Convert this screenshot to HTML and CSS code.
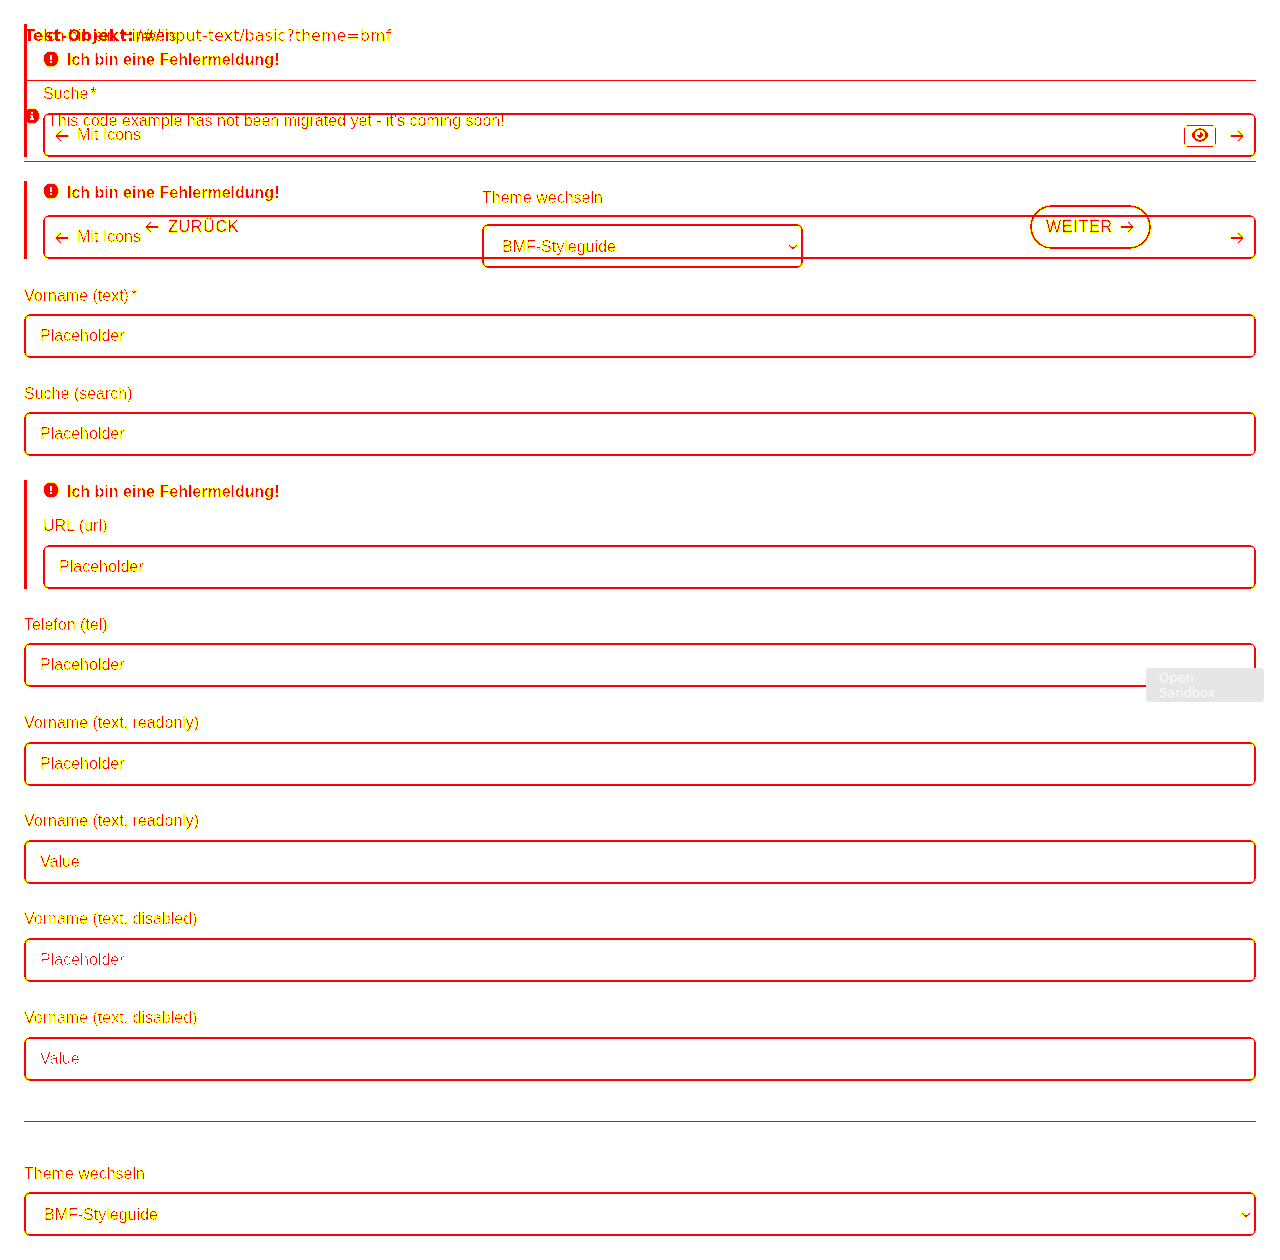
FILE: index.html
```
<!DOCTYPE html>
<html lang="de">
<head>
<meta charset="utf-8">
<title>Input Text</title>
<link rel="stylesheet" href="styles.css">
</head>
<body>
<svg class="defs" aria-hidden="true">
  <filter id="ink" x="0" y="0" width="100%" height="100%" color-interpolation-filters="sRGB">
    <feComponentTransfer in="SourceAlpha" result="edge"><feFuncR type="discrete" tableValues="1"/><feFuncG type="discrete" tableValues="1"/><feFuncA type="discrete" tableValues="0 0 1 1 1 1 1 1 1 1"/></feComponentTransfer>
    <feComponentTransfer in="SourceAlpha" result="core"><feFuncR type="discrete" tableValues="1"/><feFuncA type="discrete" tableValues="0 0 0 0 0 0 0 0 1 1"/></feComponentTransfer>
    <feMerge><feMergeNode in="edge"/><feMergeNode in="core"/></feMerge>
  </filter>
  <filter id="faint" x="0" y="0" width="100%" height="100%" color-interpolation-filters="sRGB">
    <feComponentTransfer in="SourceAlpha"><feFuncA type="discrete" tableValues="0 0 0 0 0 0 0 0 1 1"/></feComponentTransfer>
  </filter>
  <symbol id="left" viewBox="0 0 14 12"><path d="M13.5 6H1M6 1L1 6l5 5" fill="none" stroke="#000" stroke-width="1.4"/><path d="M1 5h12v2H1z"/></symbol>
  <symbol id="right" viewBox="0 0 14 12"><path d="M.5 6H13M8 1l5 5-5 5" fill="none" stroke="#000" stroke-width="1.4"/><path d="M1 5h12v2H1z"/></symbol>
  <symbol id="alert" viewBox="0 0 16 16"><path fill-rule="evenodd" d="M8 .3a7.7 7.7 0 1 0 0 15.4A7.7 7.7 0 0 0 8 .3zM7 4h2v5H7zm0 6h2v2H7z"/></symbol>
  <symbol id="info" viewBox="0 0 16 16"><path fill-rule="evenodd" d="M8 .3a7.7 7.7 0 1 0 0 15.4A7.7 7.7 0 0 0 8 .3zM7 4h2v2H7zM6 7h3v3h1v2H6v-2h1V8H6z"/></symbol>
  <symbol id="eye" viewBox="0 0 18 14"><path fill-rule="evenodd" d="M9 0C5 0 2 3 0 7c2 4 5 7 9 7s7-3 9-7c-2-4-5-7-9-7zm0 2a5 5 0 1 1 0 10A5 5 0 0 1 9 2zm0 2v3H6a3 3 0 1 0 3-3z"/></symbol>
  <symbol id="down" viewBox="0 0 10 6"><path d="M1 1l4 3.5L9 1" fill="none" stroke="#000" stroke-width="1.4"/></symbol>
</svg>
<div class="stage">
  <main class="form">
    <section class="group first">
      <p class="caption">Ich bin ein Hinweis</p>
      <p class="error"><svg><use href="#alert"/></svg>Ich bin eine Fehlermeldung!</p>
      <label>Suche<span class="star">*</span></label>
      <div class="field icons"><svg class="arrow"><use href="#left"/></svg><span>Mit Icons</span><button class="eye"><svg><use href="#eye"/></svg></button><svg class="arrow"><use href="#right"/></svg></div>
    </section>
    <section class="group second">
      <p class="error"><svg><use href="#alert"/></svg>Ich bin eine Fehlermeldung!</p>
      <div class="field icons"><svg class="arrow"><use href="#left"/></svg><span>Mit Icons</span><svg class="arrow end"><use href="#right"/></svg></div>
    </section>
    <section class="plain"><label>Vorname (text)<span class="star">*</span></label><div class="field">Placeholder</div></section>
    <section class="plain search"><label>Suche (search)</label><div class="field">Placeholder</div></section>
    <section class="group url">
      <p class="error"><svg><use href="#alert"/></svg>Ich bin eine Fehlermeldung!</p>
      <label>URL (url)</label><div class="field">Placeholder</div>
    </section>
    <section class="plain"><label>Telefon (tel)</label><div class="field">Placeholder</div></section>
    <section class="plain"><label>Vorname (text, readonly)</label><div class="field">Placeholder</div></section>
    <section class="plain"><label>Vorname (text, readonly)</label><div class="field">Value</div></section>
    <section class="plain disabled"><label>Vorname (text, disabled)</label><div class="field"><span>Placeholder</span></div></section>
    <section class="plain disabled last"><label>Vorname (text, disabled)</label><div class="field"><span>Value</span></div></section>
    <hr>
    <section class="theme"><label>Theme wechseln</label><div class="field select">BMF-Styleguide<svg><use href="#down"/></svg></div></section>
  </main>
  <div class="overlay">
    <header><b>Test-Objekt:</b><span>/#/input-text/basic?theme=bmf</span></header>
    <p class="info"><svg><use href="#info"/></svg>This code example has not been migrated yet - it's coming soon!</p>
    <nav>
      <a class="back"><svg class="arrow"><use href="#left"/></svg>ZURÜCK</a>
      <div class="switch"><label>Theme wechseln</label><div class="field select">BMF-Styleguide<svg><use href="#down"/></svg></div></div>
      <a class="next">WEITER<svg class="arrow"><use href="#right"/></svg></a>
    </nav>
  </div>
</div>
<button class="sandbox">Open Sandbox</button>
</body>
</html>
```
FILE: styles.css
```
* { box-sizing: border-box; }
body { margin: 0; background: #fff; font: 16px/20px "Liberation Sans", sans-serif; color: #000; height: 1260px; overflow: hidden; }
p { margin: 0; }
button { font: inherit; background: none; }
.defs { position: absolute; width: 0; height: 0; }
.stage { position: relative; height: 1260px; filter: url(#ink); }
.form { padding: 24px 24px 0; }
.group { border-left: 3px solid; padding-left: 16px; margin-bottom: 24px; display: flex; flex-direction: column; }
.group .field { margin-top: auto; }
.first { height: 133px; }
.second { height: 78px; margin-bottom: 26px; }
.url { height: 109px; margin-bottom: 25px; }
.caption { height: 25px; padding-top: 2px; }
.error { display: flex; align-items: center; gap: 8px; height: 21px; font-weight: bold; margin-bottom: 14px; }
.error svg, .info svg { width: 16px; height: 16px; flex: none; }
.error svg { margin-top: -2px; }
.second .error, .url .error { height: 23px; margin-bottom: 13px; }
.second .error { margin-bottom: 0; }
.second .error svg, .url .error svg { margin-top: -4px; }
label { display: block; height: 20px; }
.star { margin-left: 2px; }
.field { height: 44px; border: 2px solid; border-radius: 6px; padding: 0 14px; display: flex; align-items: center; }
.plain { height: 73px; margin-bottom: 25.3px; display: flex; flex-direction: column; justify-content: space-between; }
.plain label { padding-top: .5px; }
.search { margin-bottom: 24px; }
.plain.last { margin-top: 26px; }
.field.icons { padding: 1px 10px 0; }
.arrow { width: 14px; height: 12px; flex: none; }
.icons span { margin-left: 8px; margin-right: auto; padding-bottom: 1px; }
.eye { width: 32px; height: 22px; border: 1px solid; border-radius: 4px; padding: 0; display: flex; align-items: center; justify-content: center; margin-right: 14px; color: #000; }
.eye svg { width: 18px; height: 14px; margin-top: -2px; }
.disabled label { color: rgba(0,0,0,.9); padding-top: 0; }
.disabled .field span { filter: url(#faint); }
hr { border: 0; height: 1px; background: #000; margin: 40px 0 42px; }
.field.select { justify-content: space-between; padding: 1px 3px 0 18px; }
.theme .field.select { padding-top: 2px; }
.select svg { width: 10px; height: 6px; }
.theme label { height: 28px; }
.overlay { position: absolute; inset: 0 24px auto 24px; }
.overlay header { height: 81px; border-bottom: 1px solid; padding-top: 26px; display: flex; gap: 3px; font-family: "DejaVu Sans", sans-serif; }
.info { height: 81px; border-bottom: 1px solid; display: flex; gap: 8px; padding-top: 30px; }
.info svg { margin-top: -3px; }
.overlay nav { display: grid; grid-template-columns: 458px 321px 1fr; padding-top: 26px; }
.back, .next { display: flex; align-items: center; gap: 9px; height: 44px; letter-spacing: .75px; margin-top: 17px; -webkit-text-stroke: .35px #000; }
.back { padding-left: 121px; }
.next { width: 121px; border: 2px solid; border-radius: 22px; margin-left: 227px; padding-left: 14px; gap: 7px; }
.switch label { height: 36px; }
.sandbox { position: absolute; left: 1146px; top: 668px; width: 118px; height: 34px; border: 0; border-radius: 4px; background: #e6e6e6; color: #fafafa; padding: 2px 40px 2px 13px; font: 13px/15px "DejaVu Sans", sans-serif; text-align: left; }
```
